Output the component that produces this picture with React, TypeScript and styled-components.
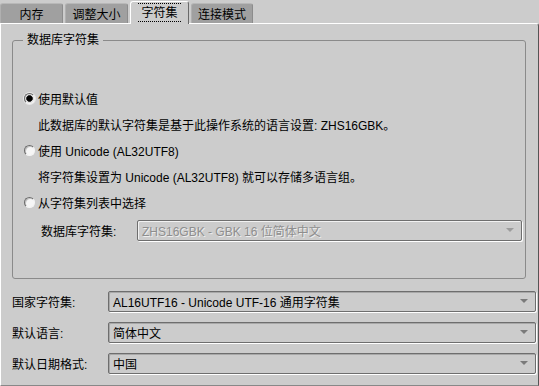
import React from 'react';
import styled, { createGlobalStyle } from 'styled-components';

const GlobalStyle = createGlobalStyle`
  html, body {
    margin: 0;
    padding: 0;
    background: #cccccc;
  }
`;

////////////////////// styled [START]
const Page = styled.div`
  width: 539px;
  height: 386px;
  display: flex;
  flex-direction: column;
  background: #cccccc;
  color: #000;
  font-family: 'Liberation Sans', 'Noto Sans CJK SC', sans-serif;
  font-size: 12px;
  overflow: hidden;
`;

const TabStrip = styled.div`
  display: flex;
  align-items: flex-end;
  gap: 2px;
  height: 23px;
  flex: none;
`;

type TabType = { $active?: boolean; $width: number };
const Tab = styled.div<TabType>`
  position: relative;
  z-index: ${({ $active }) => ($active ? 1 : 0)};
  box-sizing: border-box;
  width: ${({ $width }) => $width}px;
  height: ${({ $active }) => ($active ? 23 : 20)}px;
  margin-bottom: ${({ $active }) => ($active ? -1 : 0)}px;
  display: flex;
  align-items: center;
  justify-content: center;
  padding-bottom: ${({ $active }) => ($active ? 2 : 0)}px;
  border-radius: 3px 3px 0 0;
  background: ${({ $active }) => ($active ? '#cccccc' : '#a0a0a0')};
  border-top: 1px solid ${({ $active }) => ($active ? '#ffffff' : '#b8b8b8')};
  border-left: 1px solid ${({ $active }) => ($active ? '#ffffff' : '#b0b0b0')};
  border-right: 1px solid ${({ $active }) => ($active ? '#6a6a6a' : '#8c8c8c')};
`;

const FocusText = styled.span`
  padding: 1px 3px 0;
  border-top: 1px dotted #000;
  border-bottom: 1px dotted #000;
  line-height: 16px;
`;

const Panel = styled.div`
  flex: 1;
  display: flex;
  flex-direction: column;
  border-top: 1px solid #ffffff;
  border-left: 1px solid #ffffff;
  border-right: 1px solid #555555;
  border-bottom: 1px solid #888888;
  border-radius: 0 3px 0 0;
`;

const GroupBox = styled.div`
  position: relative;
  box-sizing: border-box;
  height: 239px;
  margin: 16px 12px 0 11px;
  padding: 44px 0 0 11px;
  border: 1px solid #8a8a8a;
  border-radius: 3px;
  display: flex;
  flex-direction: column;
`;

const GroupTitle = styled.span`
  position: absolute;
  top: -9px;
  left: 10px;
  padding: 0 4px;
  line-height: 16px;
  background: #cccccc;
`;

type LineType = { $indent?: number };
const Line = styled.div<LineType>`
  height: 26px;
  display: flex;
  align-items: center;
  padding-left: ${({ $indent }) => $indent ?? 0}px;
  white-space: nowrap;
`;

type RadioMarkType = { $checked?: boolean };
const RadioMark = styled.span<RadioMarkType>`
  box-sizing: border-box;
  width: 11px;
  height: 11px;
  margin-right: 3px;
  border-radius: 50%;
  border: 1px solid;
  border-color: #6a6a6a #f4f4f4 #f4f4f4 #6a6a6a;
  background: ${({ $checked }) =>
    $checked
      ? 'radial-gradient(circle, #000 0, #000 2.6px, #555 3.2px, #dcdcdc 3.6px)'
      : '#f6f6f6'};
  box-shadow: ${({ $checked }) =>
    $checked ? '0 0 0 1px #e8e8e8' : 'inset 1px 1px 0 #c4c4c4'};
`;

const ComboLine = styled.div`
  height: 30px;
  display: flex;
  align-items: center;
  padding-left: 17px;
  padding-right: 3px;
`;

type FieldLabelType = { $width?: number };
const FieldLabel = styled.span<FieldLabelType>`
  flex: none;
  width: ${({ $width }) => ($width ? `${$width}px` : 'auto')};
  white-space: nowrap;
`;

type ComboType = { $disabled?: boolean };
const Combo = styled.div<ComboType>`
  position: relative;
  box-sizing: border-box;
  flex: 1;
  height: 21px;
  display: flex;
  align-items: center;
  padding: 0 16px 0 4px;
  border: 1px solid #6e6e6e;
  border-radius: 2px;
  box-shadow: 1px 1px 0 #ffffff, inset 1px 1px 0 ${({ $disabled }) => ($disabled ? '#f2f2f2' : '#a8a8a8')};
  color: ${({ $disabled }) => ($disabled ? '#8e8e8e' : '#000')};
  text-shadow: ${({ $disabled }) => ($disabled ? '1px 1px 0 #eeeeee' : 'none')};
  white-space: nowrap;
`;

const Arrow = styled.span<ComboType>`
  position: absolute;
  right: 7px;
  top: 7px;
  width: 0;
  height: 0;
  border-left: 4px solid transparent;
  border-right: 4px solid transparent;
  border-top: 4px solid ${({ $disabled }) => ($disabled ? '#9c9c9c' : '#7a7a7a')};
`;

const Form = styled.div`
  display: grid;
  grid-template-columns: 96px 1fr;
  row-gap: 10px;
  align-items: center;
  margin-top: 12px;
  padding: 0 2px 0 11px;
`;
////////////////////// styled [END]

const tabs = [
  { label: '内存', width: 63 },
  { label: '调整大小', width: 63 },
  { label: '字符集', width: 59, active: true },
  { label: '连接模式', width: 62 },
];

const settings = [
  { label: '国家字符集:', value: 'AL16UTF16 - Unicode UTF-16 通用字符集' },
  { label: '默认语言:', value: '简体中文' },
  { label: '默认日期格式:', value: '中国' },
];

type ComboBoxProps = { value: string; disabled?: boolean };
const ComboBox: React.FC<ComboBoxProps> = ({ value, disabled }) => (
  <Combo $disabled={disabled}>
    {value}
    <Arrow $disabled={disabled} />
  </Combo>
);

const App: React.FC = () => {
  return (
    <Page>
      <GlobalStyle />
      <TabStrip>
        {tabs.map((t) => (
          <Tab key={t.label} $active={t.active} $width={t.width}>
            {t.active ? <FocusText>{t.label}</FocusText> : t.label}
          </Tab>
        ))}
      </TabStrip>
      <Panel>
        <GroupBox>
          <GroupTitle>数据库字符集</GroupTitle>
          <Line>
            <RadioMark $checked />
            使用默认值
          </Line>
          <Line $indent={14}>此数据库的默认字符集是基于此操作系统的语言设置: ZHS16GBK。</Line>
          <Line>
            <RadioMark />
            使用 Unicode (AL32UTF8)
          </Line>
          <Line $indent={14}>将字符集设置为 Unicode (AL32UTF8) 就可以存储多语言组。</Line>
          <Line>
            <RadioMark />
            从字符集列表中选择
          </Line>
          <ComboLine>
            <FieldLabel $width={96}>数据库字符集:</FieldLabel>
            <ComboBox value="ZHS16GBK - GBK 16 位简体中文" disabled />
          </ComboLine>
        </GroupBox>
        <Form>
          {settings.map((s) => (
            <React.Fragment key={s.label}>
              <FieldLabel>{s.label}</FieldLabel>
              <ComboBox value={s.value} />
            </React.Fragment>
          ))}
        </Form>
      </Panel>
    </Page>
  );
};

export default App;
